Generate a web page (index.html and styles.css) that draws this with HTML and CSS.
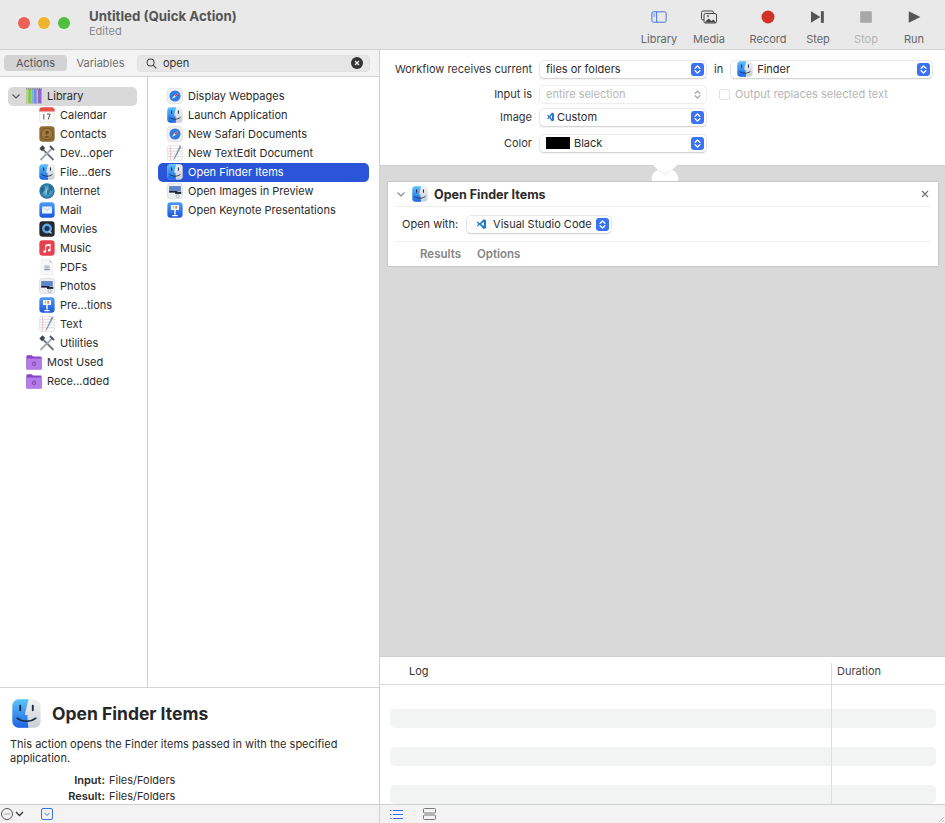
FILE: index.html
```html
<!DOCTYPE html>
<html lang="en">
<head>
<meta charset="utf-8">
<title>Untitled (Quick Action)</title>
<link rel="stylesheet" href="styles.css">
</head>
<body>
<svg class="defs" aria-hidden="true">
  <defs>
    <linearGradient id="gBlue" x1="0" y1="0" x2="0" y2="1"><stop offset="0" stop-color="#5cc3f8"/><stop offset="1" stop-color="#1f63e6"/></linearGradient>
    <linearGradient id="gGrey" x1="0" y1="0" x2="0" y2="1"><stop offset="0" stop-color="#f2f2f2"/><stop offset="1" stop-color="#c9ced6"/></linearGradient>
    <linearGradient id="gKey" x1="0" y1="0" x2="0" y2="1"><stop offset="0" stop-color="#4f9cf8"/><stop offset="1" stop-color="#1b55dc"/></linearGradient>
    <radialGradient id="gGlobe"><stop offset="0" stop-color="#8fd4e8"/><stop offset="1" stop-color="#1c6c9c"/></radialGradient>
    <symbol id="finder" viewBox="-0.5 -0.5 21 21">
      <rect x="1" y="1" width="18" height="18" rx="4" fill="url(#gGrey)"/>
      <path d="M5 1h6.400C10.300 5 9.400 8 9 11h1.600c0 2 .2 5 .6 8H5a4 4 0 0 1-4-4V5a4 4 0 0 1 4-4z" fill="url(#gBlue)"/>
      <path d="M6 5v3M14 5v3" stroke="#1d2b44" stroke-width="1.200" fill="none" stroke-linecap="round"/>
      <path d="M4 13c3.500 2.600 8.500 2.600 12 0" stroke="#1d2b44" stroke-width="1" fill="none" stroke-linecap="round"/>
    </symbol>
    <symbol id="safari" viewBox="-0.5 -0.5 21 21">
      <rect x="1" y="1" width="18" height="18" rx="4.500" fill="#f1f1f3" stroke="#d0d0d2" stroke-width=".6"/>
      <circle cx="10" cy="10" r="6.500" fill="#2f7de0"/>
      <path d="M13.500 6.500L11 11 6.500 13.500 9 9z" fill="#fff"/>
      <path d="M13.500 6.500L11 11 9 9z" fill="#e4412f"/>
    </symbol>
    <symbol id="textedit" viewBox="0 0 20 20">
      <rect x="1.500" y="1.500" width="17" height="17" rx="3" fill="#fbfbfb" stroke="#d8d8d8" stroke-width=".6"/>
      <path d="M2 5h16M2 8h16M2 11h16M2 14h16" stroke="#c8ced6" stroke-width=".6"/>
      <path d="M5 2v16" stroke="#ee9c9c" stroke-width=".6"/>
      <path d="M15.500 1.500L9 15.500 8 18l2-2L17 3z" fill="#8a94a4"/>
    </symbol>
    <symbol id="calendar" viewBox="0 0 20 20">
      <rect x="1.500" y="1.500" width="17" height="17" rx="3.500" fill="#f8f8f8" stroke="#d8d8d8" stroke-width=".5"/>
      <path d="M1.500 6V5a3.500 3.500 0 0 1 3.500-3.500h10A3.500 3.500 0 0 1 18.500 5v1z" fill="#e8524a"/>
      <path d="M6.500 9v6M10 9h3.500l-2.200 6" stroke="#4a4a4a" stroke-width="1" fill="none"/>
    </symbol>
    <symbol id="contacts" viewBox="0 0 20 20">
      <rect x="1.500" y="1.500" width="17" height="17" rx="3.500" fill="#8f6a33"/>
      <circle cx="10" cy="10" r="6.500" fill="#a07b40" stroke="#6a4c22" stroke-width=".8"/>
      <circle cx="10" cy="8.500" r="2" fill="#6a4c22"/>
      <path d="M6.500 14c.8-2.500 6.200-2.500 7 0z" fill="#6a4c22"/>
    </symbol>
    <symbol id="tools" viewBox="0 0 20 20">
      <path d="M4 3l14 14-1.500 1.500L2.500 4.500z" fill="#6f7580"/>
      <path d="M16 3L2 17l1.500 1.500L17.500 4.500z" fill="#a3a9b2"/>
      <path d="M1.500 5L5 1.500 8 4.500 4.500 8z" fill="#3f444c"/>
      <path d="M14 1.500l4.500 4.500-1.500 1.500-4.500-4.500z" fill="#50565f"/>
    </symbol>
    <symbol id="globe" viewBox="0 0 20 20">
      <circle cx="10" cy="10" r="8.500" fill="url(#gGlobe)"/>
      <path d="M5 5c2 0 3 1 3 3S6 10 5 12 3 9 3 8zM12 4c2 0 4 2 4 4s-2 1-3 3-1 4-2 4-1-3-1-5 2-1 2-3-1-2 0-3z" fill="#1a5a85" opacity=".7"/>
    </symbol>
    <symbol id="mail" viewBox="0 0 20 20">
      <rect x="1.500" y="1.500" width="17" height="17" rx="3.500" fill="url(#gKey)"/>
      <rect x="4.500" y="6" width="11" height="8" rx=".8" fill="#eef3fb"/>
      <path d="M4.500 6.500L10 10.500l5.500-4" stroke="#a8bcd8" stroke-width=".7" fill="none"/>
    </symbol>
    <symbol id="movies" viewBox="0 0 20 20">
      <rect x="1.500" y="1.500" width="17" height="17" rx="3.500" fill="#24272c"/>
      <circle cx="10" cy="9.500" r="5.500" fill="#5ba6e6"/>
      <circle cx="10" cy="9.500" r="2.800" fill="#1b3350"/>
      <path d="M12 12l3 3" stroke="#c8ccd2" stroke-width="1.500"/>
    </symbol>
    <symbol id="music" viewBox="0 0 20 20">
      <rect x="1.500" y="1.500" width="17" height="17" rx="3.500" fill="#e5424d"/>
      <path d="M8 6.500l6-1.300v7.300a1.600 1.400 0 1 1-1-1.300V7.500l-4 .9v5.600a1.600 1.400 0 1 1-1-1.300z" fill="#fff"/>
    </symbol>
    <symbol id="pdf" viewBox="0 0 20 20">
      <path d="M3.500 1.500h9l4 4v13h-13z" fill="#f7f7f7" stroke="#e2e2e2" stroke-width=".5"/>
      <path d="M12.500 1.500v4h4z" fill="#d6d6d6"/>
      <path d="M7 9h6M7 11h6" stroke="#7a8597" stroke-width=".9"/>
      <path d="M7 13h6" stroke="#3f5e96" stroke-width=".9"/>
    </symbol>
    <symbol id="preview" viewBox="0 0 20 20">
      <rect x="1.500" y="1.500" width="17" height="17" rx="3.500" fill="#eceef1" stroke="#c8c8c8" stroke-width=".5"/>
      <rect x="3.500" y="4.500" width="13" height="6" fill="#5f86c8"/>
      <rect x="3.500" y="10" width="9" height="1.800" fill="#1c2430"/>
      <rect x="10" y="11" width="7" height="2.200" fill="#1c2430"/>
      <circle cx="13" cy="15.500" r="1.800" fill="none" stroke="#8a8f96" stroke-width=".6"/>
    </symbol>
    <symbol id="keynote" viewBox="0 0 20 20">
      <rect x="1.500" y="1.500" width="17" height="17" rx="3.500" fill="url(#gKey)"/>
      <rect x="5.500" y="4.500" width="9" height="5.500" fill="#fafafa"/>
      <rect x="7.500" y="5.500" width="1.500" height="3" fill="#e2c04a"/>
      <rect x="10.500" y="5.500" width="1.500" height="3" fill="#d75a4a"/>
      <path d="M9.200 10h1.600v5H9.200zM7 15.500h6V17H7z" fill="#fff"/>
    </symbol>
    <symbol id="library" viewBox="0 0 20 20">
      <rect x="1.500" y="2" width="6" height="16.500" fill="#8ac64a" stroke="#c8c8c8" stroke-width=".4"/>
      <rect x="7.500" y="2" width="5" height="16.500" fill="#5b9ad6" stroke="#c8c8c8" stroke-width=".4"/>
      <rect x="12.500" y="2" width="6" height="16.500" fill="#8f62d6" stroke="#c8c8c8" stroke-width=".4"/>
      <path d="M3 2v16.500M9 2v16.500M14 2v16.500" stroke="#e8e8e8" stroke-width=".7"/>
      <path d="M1.500 2h17" stroke="#555" stroke-width="1" stroke-dasharray="1 1"/>
    </symbol>
    <symbol id="folder" viewBox="0 0 20 20">
      <path d="M1.500 4a1.500 1.500 0 0 1 1.500-1.500h4.500L9 4h8a1.500 1.500 0 0 1 1.500 1.500V18h-17z" fill="#8a45c4"/>
      <path d="M1.500 6h17v11.500a1 1 0 0 1-1 1h-15a1 1 0 0 1-1-1z" fill="#b47ce8"/>
      <circle cx="10" cy="12" r="2" fill="none" stroke="#7b3eb0" stroke-width=".9"/>
      <circle cx="10" cy="12" r=".6" fill="#7b3eb0"/>
    </symbol>
    <symbol id="vscode" viewBox="0 0 16 16">
      <path d="M11 1.500L5.500 7 2.800 4.800 1.500 5.500 4 8l-2.500 2.500 1.300.7L5.500 9l5.500 5.500 3-1.300V2.800zM11 5v6L7.500 8z" fill="#1f78c8"/>
    </symbol>
    <symbol id="updown" viewBox="0 0 12 12">
      <path d="M3.800 4.800L6 2.800l2.200 2M3.800 7.200L6 9.200l2.200-2" fill="none" stroke="currentColor" stroke-width="1.200" stroke-linecap="round" stroke-linejoin="round"/>
    </symbol>
  </defs>
</svg>

<div class="window">
  <header class="titlebar">
    <div class="lights"><span class="light red"></span><span class="light yellow"></span><span class="light green"></span></div>
    <div class="doc">
      <div class="doc-title">Untitled (Quick Action)</div>
      <div class="doc-sub">Edited</div>
    </div>
    <nav class="tools">
      <div class="tool">
        <svg class="tool-icon" viewBox="-1.500 -1 19 14"><rect x=".5" y=".5" width="15" height="11" rx="1.500" fill="none" stroke="#3a6fe8"/><path d="M5.500 .5v11" stroke="#3a6fe8"/><path d="M2 3h2M2 5h2" stroke="#3a6fe8" stroke-width=".8"/></svg>
        <span>Library</span>
      </div>
      <div class="tool">
        <svg class="tool-icon" viewBox="-1 -.5 18 14"><rect x=".5" y=".5" width="12" height="9" rx="1.500" fill="none" stroke="#444"/><rect x="3" y="3" width="12.500" height="9.500" rx="1.500" fill="#e9e9e9" stroke="#444"/><path d="M3.500 12l4-4 3 2.500 2-1.500 2.500 3z" fill="#444"/><circle cx="7" cy="5.500" r=".9" fill="#444"/></svg>
        <span>Media</span>
      </div>
      <div class="tool tool-record">
        <svg class="tool-icon" viewBox="0 0 14 14"><circle cx="7" cy="7" r="6.500" fill="#d03226"/></svg>
        <span>Record</span>
      </div>
      <div class="tool tool-step">
        <svg class="tool-icon" viewBox="0 0 14 12"><path d="M1 1l8 5-8 5z" fill="#555"/><rect x="9.500" y="1" width="2.500" height="10" fill="#555"/></svg>
        <span>Step</span>
      </div>
      <div class="tool tool-narrow tool-off">
        <svg class="tool-icon" viewBox="0 0 12 12"><rect x="1" y="1" width="10" height="10" rx="1" fill="#a8a8a8"/></svg>
        <span>Stop</span>
      </div>
      <div class="tool tool-narrow">
        <svg class="tool-icon" viewBox="0 0 12 12"><path d="M1.500 1l10 5-10 5z" fill="#555"/></svg>
        <span>Run</span>
      </div>
    </nav>
  </header>

  <main class="panes">
    <section class="left">
      <div class="filter">
        <span class="seg seg-on">Actions</span>
        <span class="seg">Variables</span>
        <div class="search">
          <svg class="search-glass" viewBox="0 0 12 12"><circle cx="5" cy="5" r="3.800" fill="none" stroke="#444" stroke-width="1.100"/><path d="M8 8l3.300 3.300" stroke="#444" stroke-width="1.200"/></svg>
          <span class="search-text">open</span>
          <svg class="search-clear" viewBox="0 0 12 12"><circle cx="6" cy="6" r="6" fill="#333"/><path d="M4 4l4 4M8 4l-4 4" stroke="#fff" stroke-width="1.200"/></svg>
        </div>
      </div>
      <div class="browser">
        <ul class="tree">
          <li class="row row-top row-on"><svg class="chev" viewBox="0 0 10 10"><path d="M1.500 3.500L5 7l3.500-3.500" fill="none" stroke="#555" stroke-width="1.200"/></svg><svg class="ic"><use href="#library"/></svg>Library</li>
          <li class="row row-sub"><svg class="ic"><use href="#calendar"/></svg>Calendar</li>
          <li class="row row-sub"><svg class="ic"><use href="#contacts"/></svg>Contacts</li>
          <li class="row row-sub"><svg class="ic"><use href="#tools"/></svg>Dev...oper</li>
          <li class="row row-sub"><svg class="ic"><use href="#finder"/></svg>File...ders</li>
          <li class="row row-sub"><svg class="ic"><use href="#globe"/></svg>Internet</li>
          <li class="row row-sub"><svg class="ic"><use href="#mail"/></svg>Mail</li>
          <li class="row row-sub"><svg class="ic"><use href="#movies"/></svg>Movies</li>
          <li class="row row-sub"><svg class="ic"><use href="#music"/></svg>Music</li>
          <li class="row row-sub"><svg class="ic"><use href="#pdf"/></svg>PDFs</li>
          <li class="row row-sub"><svg class="ic"><use href="#preview"/></svg>Photos</li>
          <li class="row row-sub"><svg class="ic"><use href="#keynote"/></svg>Pre...tions</li>
          <li class="row row-sub"><svg class="ic"><use href="#textedit"/></svg>Text</li>
          <li class="row row-sub"><svg class="ic"><use href="#tools"/></svg>Utilities</li>
          <li class="row row-top"><svg class="ic"><use href="#folder"/></svg>Most Used</li>
          <li class="row row-top"><svg class="ic"><use href="#folder"/></svg>Rece...dded</li>
        </ul>
        <ul class="actions">
          <li class="row act"><svg class="ic"><use href="#safari"/></svg>Display Webpages</li>
          <li class="row act"><svg class="ic"><use href="#finder"/></svg>Launch Application</li>
          <li class="row act"><svg class="ic"><use href="#safari"/></svg>New Safari Documents</li>
          <li class="row act"><svg class="ic"><use href="#textedit"/></svg>New TextEdit Document</li>
          <li class="row act act-on"><svg class="ic"><use href="#finder"/></svg>Open Finder Items</li>
          <li class="row act"><svg class="ic"><use href="#preview"/></svg>Open Images in Preview</li>
          <li class="row act"><svg class="ic"><use href="#keynote"/></svg>Open Keynote Presentations</li>
        </ul>
      </div>
      <div class="desc">
        <div class="desc-head"><svg class="desc-icon"><use href="#finder"/></svg><h2>Open Finder Items</h2></div>
        <p>This action opens the Finder items passed in with the specified application.</p>
        <div class="kv"><b>Input:</b><span>Files/Folders</span></div>
        <div class="kv"><b>Result:</b><span>Files/Folders</span></div>
      </div>
      <footer class="bar bar-left">
        <svg class="bar-more" viewBox="0 0 26 14"><circle cx="7" cy="7" r="5.500" fill="none" stroke="#555"/><path d="M4.500 7h1M6.500 7h1M8.500 7h1" stroke="#555"/><path d="M16 5l3.500 3.500L23 5" fill="none" stroke="#333" stroke-width="1.300"/></svg>
        <svg class="bar-box" viewBox="0 0 12 12"><rect x=".5" y=".5" width="11" height="11" rx="1.500" fill="none" stroke="#3a6fe8"/><path d="M3.500 5L6 7.500 8.500 5" fill="none" stroke="#3a6fe8"/></svg>
      </footer>
    </section>

    <section class="right">
      <form class="form">
        <div class="frow frow-first">
          <label>Workflow receives current</label>
          <div class="sel"><span class="sel-text">files or folders</span><span class="step"><svg><use href="#updown"/></svg></span></div>
          <span class="in">in</span>
          <div class="sel sel-app"><svg class="ic ic-sel"><use href="#finder"/></svg><span class="sel-text">Finder</span><span class="step"><svg><use href="#updown"/></svg></span></div>
        </div>
        <div class="frow frow-second">
          <label>Input is</label>
          <div class="sel sel-off"><span class="sel-text">entire selection</span><span class="step step-off"><svg><use href="#updown"/></svg></span></div>
          <span class="check"></span><span class="check-label">Output replaces selected text</span>
        </div>
        <div class="frow">
          <label>Image</label>
          <div class="sel"><svg class="ic-custom" viewBox="0 0 7 10"><path d="M5 .5L2.200 4 .8 2.800 0 3.300 1.400 5 0 6.700l.8.500L2.200 6 5 9.500l2-.9V1.400zM5 3v4L3.300 5z" fill="#2a78d0"/></svg><span class="sel-text">Custom</span><span class="step"><svg><use href="#updown"/></svg></span></div>
        </div>
        <div class="frow frow-last">
          <label>Color</label>
          <div class="sel"><span class="swatch"></span><span class="sel-text">Black</span><span class="step"><svg><use href="#updown"/></svg></span></div>
        </div>
      </form>

      <div class="canvas">
        <svg class="notch" viewBox="0 0 28 17"><path d="M1 -1L7 5A9 9 0 0 0 1 16H27A9 9 0 0 0 21 5L27 -1z" fill="#fff"/><path d="M8 5l6 4.500L20 5" fill="none" stroke="#e3e3e3" stroke-width=".8"/></svg>
        <article class="card">
          <div class="card-head">
            <svg class="chev chev-card" viewBox="0 0 10 10"><path d="M1.500 3.500L5 7l3.500-3.500" fill="none" stroke="#888" stroke-width="1.100"/></svg>
            <svg class="ic"><use href="#finder"/></svg>
            <h3>Open Finder Items</h3>
            <svg class="close" viewBox="0 0 8 8"><path d="M1 1l6 6M7 1L1 7" stroke="#777" stroke-width="1.300"/></svg>
          </div>
          <div class="card-body">
            <span>Open with:</span>
            <div class="sel sel-vs"><svg class="ic-vs"><use href="#vscode"/></svg><span class="sel-text">Visual Studio Code</span><span class="step"><svg><use href="#updown"/></svg></span></div>
          </div>
          <div class="card-tabs"><span>Results</span><span>Options</span></div>
        </article>
      </div>

      <div class="log">
        <div class="log-head"><span class="log-col">Log</span><span class="dur-col">Duration</span></div>
        <div class="log-rows">
          <div class="stripe"></div>
          <div class="stripe"></div>
          <div class="stripe"></div>
        </div>
        <span class="log-line"></span>
      </div>
      <footer class="bar bar-right">
        <svg class="bar-list" viewBox="0 0 13 11"><path d="M3 1.500h10M3 5.500h10M3 9.500h10" stroke="#3a6fe8" stroke-width="1.100"/><path d="M0 1.500h1.500M0 5.500h1.500M0 9.500h1.500" stroke="#3a6fe8" stroke-width="1.100"/></svg>
        <svg class="bar-rows" viewBox="0 0 13 12"><rect x=".5" y=".5" width="12" height="4.500" rx="1" fill="none" stroke="#777"/><rect x=".5" y="7" width="12" height="4.500" rx="1" fill="none" stroke="#777"/></svg>
        <svg class="grip" viewBox="0 0 5 5"><path d="M0 5L5 0M3 5l2-2" stroke="#b0b0b0" stroke-width=".7"/></svg>
      </footer>
    </section>
  </main>
</div>
</body>
</html>
```

FILE: styles.css
```css
* { box-sizing: border-box; }
html, body { margin: 0; padding: 0; height: 100%; }
body { font-family: "Inter", "Liberation Sans", sans-serif; font-size: 11px; color: #2b2b2b; background: #fff; overflow: hidden; }
ul { list-style: none; margin: 0; padding: 0; }
.defs { display: block; width: 0; height: 0; }
.window { width: 945px; height: 823px; display: flex; flex-direction: column; }

.titlebar { height: 50px; flex: none; display: flex; align-items: flex-start; background: #e9e9e9; border-bottom: 1px solid #d0d0d0; }
.lights { display: flex; gap: 8px; padding: 17px 0 0 18px; }
.light { width: 12px; height: 12px; border-radius: 50%; }
.red { background: #ed5f57; }
.yellow { background: #f0b32e; }
.green { background: #4fbf40; }
.doc { margin-left: 19px; padding-top: 9px; }
.doc-title { font-size: 13.300px; font-weight: 700; line-height: 15px; color: #555; }
.doc-sub { font-size: 11px; line-height: 15px; color: #8a8a8a; }
.tools { margin-left: auto; display: flex; padding-right: 7px; }
.tool { width: 50px; display: flex; flex-direction: column; align-items: center; padding-top: 10px; color: #666; font-size: 11px; line-height: 14px; }
.tool-narrow { width: 48px; }
.tool-record { margin-left: 9px; }
.tool-step { margin-right: -1px; }
.tool-off { color: #b3b3b3; }
.tool-icon { height: 14px; width: 18px; margin-bottom: 8px; }

.panes { flex: 1; min-height: 0; display: flex; }
.left { width: 380px; flex: none; display: flex; flex-direction: column; border-right: 1px solid #d0d0d0; }
.filter { height: 27px; flex: none; display: flex; align-items: center; padding: 0 9px 0 4px; border-bottom: 1px solid #d4d4d4; background: #f3f3f3; }
.seg { height: 16px; width: 63px; border-radius: 4px; text-align: center; line-height: 16px; color: #6d6d6d; font-size: 11px; }
.seg + .seg { margin-left: 2px; }
.seg-on { background: #d3d3d3; color: #555; }
.search { margin-left: 5px; flex: 1; height: 17px; display: flex; align-items: center; background: #e6e6e6; border-radius: 4px; border: 1px solid #e0e0e0; padding: 0 6px 0 8px; }
.search-glass { width: 11px; height: 11px; }
.search-text { margin-left: 6px; color: #333; }
.search-clear { width: 12px; height: 12px; margin-left: auto; }

.browser { flex: 1; min-height: 0; display: flex; background: #fff; }
.tree { width: 148px; flex: none; padding: 10px 10px 0 8px; border-right: 1px solid #d0d0d0; }
.actions { flex: 1; padding: 10px 10px 0 10px; }
.row { height: 19px; display: flex; align-items: center; padding-bottom: 2px; white-space: nowrap; font-size: 11px; color: #2b2b2b; border-radius: 5px; }
.row-on { background: #d9d9d9; }
.row-top { padding-left: 18px; }
.row-on.row-top { padding-left: 3px; }
.row-sub { padding-left: 31px; }
.chev { width: 10px; height: 10px; margin-right: 5px; flex: none; }
.ic { width: 18px; height: 18px; margin-left: -1px; margin-right: 4px; flex: none; }
.act { padding-left: 9px; }
.act-on { background: #2a55d8; color: #fff; }

.desc { height: 117px; flex: none; padding: 9px 10px 0; border-top: 1px solid #d4d4d4; overflow: hidden; background: #fff; }
.desc-head { display: flex; align-items: center; }
.desc-icon { width: 33px; height: 33px; }
.desc h2 { margin: 0 0 0 9px; font-size: 17.500px; font-weight: 700; line-height: 30px; color: #262626; }
.desc p { margin: 7px 0 7px; font-size: 11px; line-height: 14px; }
.kv { display: flex; line-height: 16px; }
.kv b { width: 95px; text-align: right; font-weight: 600; margin-right: 4px; }

.bar { height: 19px; flex: none; display: flex; align-items: center; background: #f3f3f3; border-top: 1px solid #d0d0d0; }
.bar-more { width: 26px; height: 14px; }
.bar-box { width: 12px; height: 12px; margin-left: 15px; }
.bar-right { padding-left: 10px; }
.bar-list { width: 13px; height: 11px; }
.bar-rows { width: 13px; height: 12px; margin-left: 20px; }
.grip { width: 5px; height: 5px; margin-left: auto; margin-right: 1px; align-self: flex-end; margin-bottom: 1px; }

.right { flex: 1; min-width: 0; display: flex; flex-direction: column; }
.form { height: 115px; flex: none; padding: 10px 13px 0 0; background: #fff; }
.frow { height: 18px; display: flex; align-items: center; margin-bottom: 6px; }
.frow-first { margin-bottom: 7px; }
.frow-second { margin-bottom: 5px; }
.frow-last { margin-top: 8px; margin-bottom: 0; }
.frow label { width: 152px; text-align: right; margin-right: 8px; color: #333; flex: none; }
.sel { width: 166px; height: 17px; flex: none; display: flex; align-items: center; background: #fff; border-radius: 4px; padding: 0 2px 0 6px; box-shadow: 0 0 0 .5px #d6d6d6, 0 1px 1.500px rgba(0,0,0,.22); color: #2b2b2b; }
.sel-text { white-space: nowrap; }
.step { margin-left: auto; width: 13px; height: 13px; border-radius: 3px; background: #3a74f2; color: #fff; display: flex; }
.step svg { width: 13px; height: 13px; }
.step-off { background: none; color: #a8a8a8; }
.sel-off { box-shadow: 0 0 0 1px #eeeeee; }
.sel-off .sel-text { color: #b5b5b5; }
.in { margin: 0 8px 0 8px; color: #333; }
.sel-app { width: 201px; padding-left: 5px; }
.ic-sel { margin-left: 0; margin-right: 3px; }
.ic-custom { width: 7px; height: 10px; margin-left: 1px; margin-right: 3px; }
.check { width: 11px; height: 11px; margin-left: 13px; border: 1px solid #e2e2e2; border-radius: 2px; }
.check-label { margin-left: 5px; color: #b5b5b5; white-space: nowrap; }
.swatch { width: 24px; height: 12px; background: #000; margin-right: 4px; }

.canvas { flex: 1; min-height: 0; padding: 16px 7px 0 8px; background: #d9d9d9; border-top: 1px solid #d0d0d0; border-bottom: 1px solid #d0d0d0; position: relative; }
.notch { position: absolute; left: 271px; top: -1px; width: 28px; height: 17px; overflow: visible; }
.card { height: 84px; background: #fff; box-shadow: 0 0 1.500px rgba(0,0,0,.3); padding: 0 8px; display: flex; flex-direction: column; position: relative; }
.card-head { height: 25px; flex: none; display: flex; align-items: center; border-bottom: 1px solid #ededed; }
.chev-card { margin-right: 6px; }
.card-head .ic { margin-right: 5px; }
.card-head h3 { margin: 0; font-size: 12.500px; font-weight: 700; color: #2b2b2b; }
.close { width: 8px; height: 8px; margin-left: auto; margin-right: 1px; }
.card-body { height: 35px; flex: none; display: flex; align-items: center; border-bottom: 1px solid #ededed; padding-left: 6px; }
.sel-vs { margin-left: 9px; width: 144px; height: 17px; padding-left: 8px; }
.ic-vs { width: 13px; height: 12px; margin-right: 5px; }
.card-tabs { flex: 1; display: flex; align-items: center; gap: 16px; padding-left: 24px; font-size: 11.500px; font-weight: 600; color: #858585; }

.log { height: 147px; flex: none; position: relative; overflow: hidden; background: #fff; }
.log-head { height: 28px; display: flex; align-items: center; border-bottom: 1px solid #dedede; }
.log-col { margin-left: 29px; color: #333; }
.dur-col { margin-left: auto; width: 114px; padding-left: 6px; color: #444; }
.log-rows { padding: 24px 9px 0 10px; display: flex; flex-direction: column; gap: 19px; }
.stripe { height: 19px; background: #f2f3f3; border-radius: 5px; }
.log-line { position: absolute; left: 451px; top: 6px; bottom: 0; width: 1px; background: #dedede; }
```
